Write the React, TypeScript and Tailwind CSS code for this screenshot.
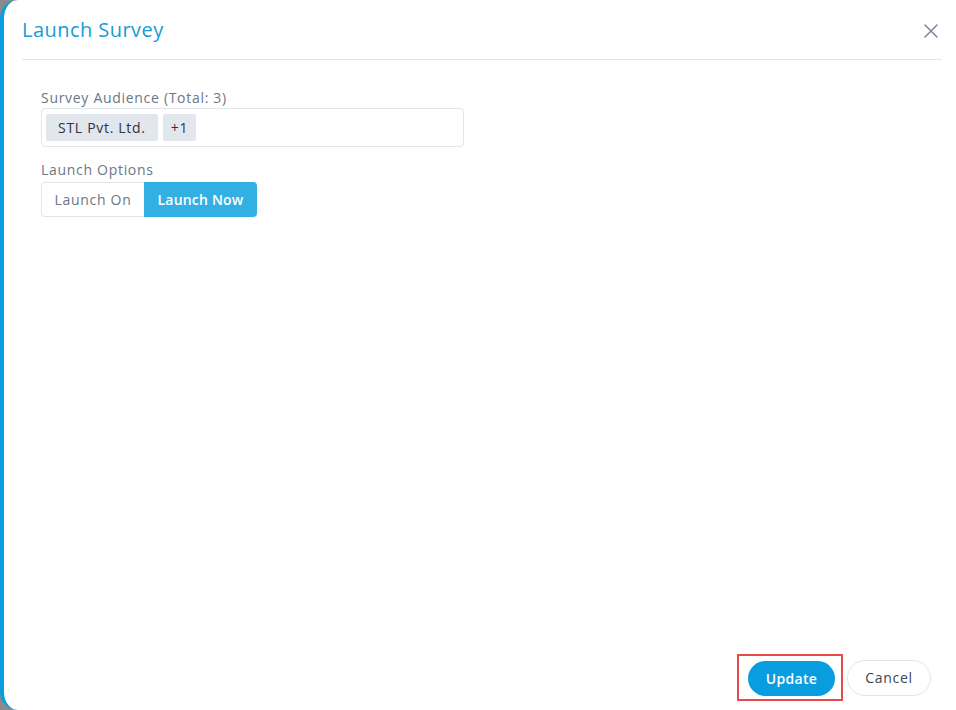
import React from "react";

export default function App() {
  const font = { fontFamily: '"Open Sans", "Noto Sans", sans-serif' };
  return (
    <div className="w-[956px] h-[710px] bg-[#8a8a8a] overflow-hidden" style={font}>
      <div className="h-full bg-white rounded-l-[18px] border-l-[4px] border-[#0a9ddf] flex flex-col">
        <div className="flex items-center justify-between pl-[18px] pr-[4px] h-[59px] mr-[14px]">
          <h1 className="text-[20px] text-[#1a9ad6] tracking-[0.45px] mt-[1px]">Launch Survey</h1>
          <svg width="14" height="14" viewBox="0 0 14 14" className="mt-[3px]">
            <path d="M1 1 L13 13 M13 1 L1 13" stroke="#7a8699" strokeWidth="1.5" strokeLinecap="round" />
          </svg>
        </div>
        <div className="ml-[18px] mr-[14px] h-px bg-[#e2e5ea]" />
        <div className="flex-1 pl-[37px] pt-[28px] tracking-[0.7px]">
          <div className="text-[14px] text-[#6b7785] leading-[20px]">Survey Audience (Total: 3)</div>
          <div className="mt-[0px] w-[423px] h-[39px] border border-[#e2e5ea] rounded-[4px] flex items-center gap-[5px] px-[4px]">
            <span className="h-[27px] px-[12px] flex items-center bg-[#e2e6ed] rounded-[2px] text-[14px] text-[#2f3441]">STL Pvt. Ltd.</span>
            <span className="h-[27px] px-[8px] flex items-center bg-[#e2e6ed] rounded-[2px] text-[14px] text-[#2f3441]">+1</span>
          </div>
          <div className="mt-[13px] text-[14px] text-[#6b7785] leading-[20px]">Launch Options</div>
          <div className="mt-[2px] flex h-[35px] w-fit">
            <button className="w-[103px] h-full border border-r-0 border-[#e2e5ea] rounded-l-[4px] text-[14px] text-[#6b7785] bg-white tracking-[0.7px]">Launch On</button>
            <button className="w-[113px] h-full rounded-r-[4px] text-[14px] font-semibold text-white bg-[#33b0e3] tracking-[0.2px]">Launch Now</button>
          </div>
        </div>
        <div className="flex justify-end items-center gap-[4px] pr-[25px] pb-[9px]">
          <div className="border-2 border-[#e84a4a] pt-[5px] pb-[3px] pl-[9px] pr-[6px]">
            <button className="w-[87px] h-[35px] rounded-full bg-[#089ddf] text-white text-[14px] font-semibold tracking-[0.3px]">Update</button>
          </div>
          <button className="w-[84px] h-[36px] rounded-full border border-[#e2e5ea] bg-white text-[14px] text-[#3b4556] tracking-[0.7px]">Cancel</button>
        </div>
      </div>
    </div>
  );
}
